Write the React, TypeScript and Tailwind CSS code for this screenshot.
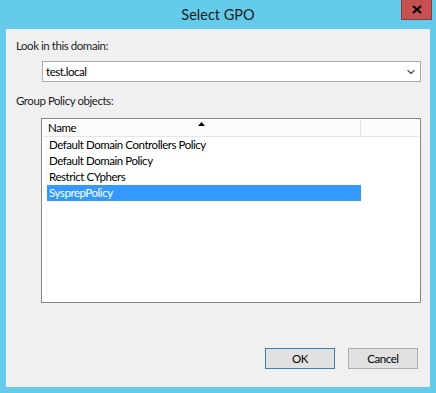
import { ChevronDown } from 'lucide-react';

const rows = [
  'Default Domain Controllers Policy',
  'Default Domain Policy',
  'Restrict CYphers',
  'SysprepPolicy',
];

export default function App() {
  return (
    <div
      className="w-[436px] h-[393px] bg-[#65cbea] flex flex-col px-[6px] pb-[6px] relative text-[11.5px] tracking-[-0.45px] text-black"
      style={{ fontFamily: 'Lato, "Noto Sans", sans-serif' }}
    >
      {/* Title bar */}
      <div className="h-[29px] flex items-center justify-center text-[14.5px] tracking-normal text-[#1e1e1e]">
        Select GPO
      </div>
      <button className="absolute top-0 right-[4px] w-[31px] h-[20px] bg-[#c75050] border border-[#8a3a3a] border-t-0 flex items-center justify-center">
        <svg width="10" height="9" viewBox="0 0 10 9">
          <path d="M1 1 L9 8 M9 1 L1 8" stroke="#000" strokeWidth="2.2" />
        </svg>
      </button>

      {/* Client area */}
      <div className="flex-1 bg-[#f0f0f0] flex flex-col pl-[10px] pr-[9px] pt-[9px] pb-[18px]">
        <div className="leading-[16px] text-[#1e1e1e]">Look in this domain:</div>

        <div className="mt-[7px] ml-[26px] h-[21px] bg-white border border-[#acacac] flex items-center justify-between pl-[3px] pr-[3px]">
          <span className="leading-[16px]">test.local</span>
          <ChevronDown size={12} strokeWidth={2.5} color="#555" />
        </div>

        <div className="mt-[11px] leading-[16px] text-[#1e1e1e]">Group Policy objects:</div>

        <div className="mt-[9px] ml-[25px] h-[185px] bg-white border border-[#828790] p-[1px] flex flex-col">
          <div className="h-[17px] flex bg-[#fcfcfc] border-b border-[#e5e5e5]">
            <div className="w-[318px] border-r border-[#e5e5e5] relative pl-[5px] leading-[16px]">
              Name
              <svg className="absolute left-[155px] top-[2px]" width="7" height="4" viewBox="0 0 7 4">
                <path d="M3.5 0 L7 4 L0 4 Z" fill="#000" />
              </svg>
            </div>
            <div className="flex-1" />
          </div>
          <div className="pl-[4px] flex flex-col">
            {rows.map((r, i) => (
              <div
                key={r}
                className={
                  'w-[314px] h-[16px] leading-[16px] pl-[2px] ' +
                  (i === 3 ? 'bg-[#3399ff] text-white' : '')
                }
              >
                {r}
              </div>
            ))}
          </div>
        </div>

        <div className="mt-auto flex justify-end gap-[13px] pr-[3px]">
          <button className="w-[70px] h-[21px] bg-[#e1e1e1] border border-[#3c7fb1] leading-[19px]">
            OK
          </button>
          <button className="w-[70px] h-[21px] bg-[#e1e1e1] border border-[#adadad] leading-[19px]">
            Cancel
          </button>
        </div>
      </div>
    </div>
  );
}
